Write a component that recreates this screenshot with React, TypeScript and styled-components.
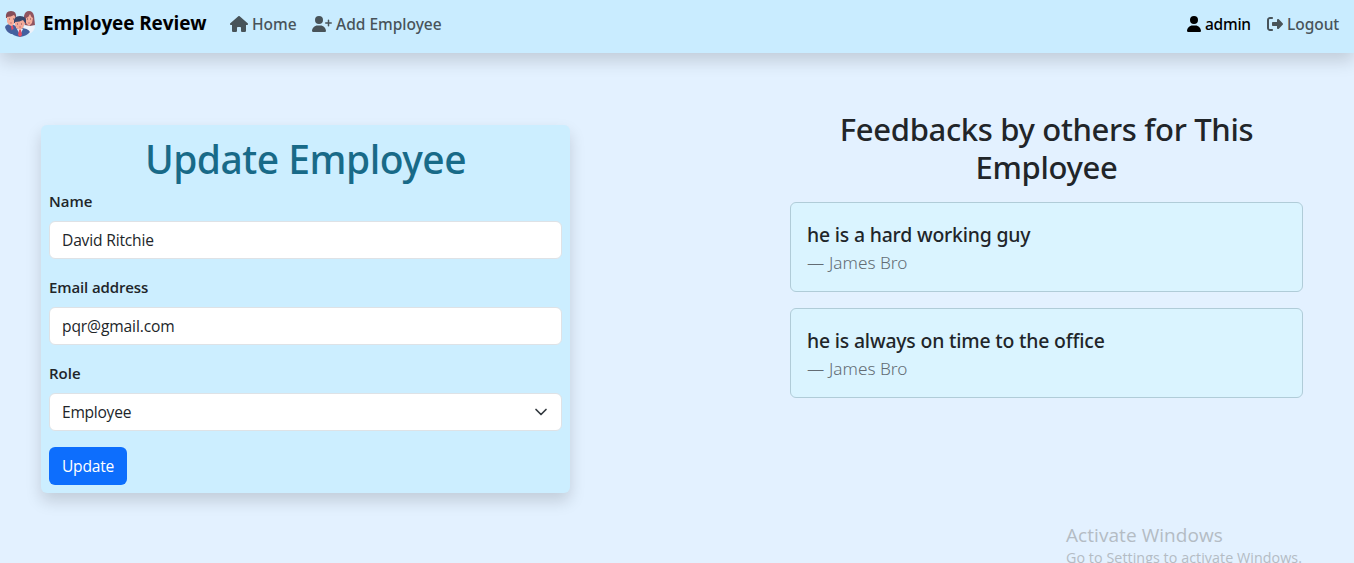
import React from "react";
import styled, { createGlobalStyle } from "styled-components";
import { FaHouse, FaUserPlus, FaUser, FaRightFromBracket } from "react-icons/fa6";

const GlobalStyle = createGlobalStyle`
  *, *::before, *::after { box-sizing: border-box; }
  body {
    margin: 0;
    background: #e3f1ff;
    color: #212529;
    font: 400 16px/1.5 "Noto Sans", "Open Sans", sans-serif;
    overflow: hidden;
  }
  h1, h2, p { margin: 0; }
`;

const Page = styled.div`
  position: relative;
  height: 563px;
  overflow: hidden;
`;

const Navbar = styled.nav`
  display: flex;
  align-items: center;
  height: 53px;
  padding: 0 15px 5px 5px;
  background: #c9ecff;
  box-shadow: 0 8px 16px rgba(0, 0, 0, 0.15);
`;

const Brand = styled.div`
  display: flex;
  align-items: center;
  gap: 6px;
  width: 225px;
  color: #000;
  font-family: "Open Sans", sans-serif;
  font-size: 19px;
  font-weight: 700;
  line-height: 26px;
  white-space: nowrap;
  svg { margin-left: -1px; margin-right: 1px; }
  span { margin-top: -2px; }
`;

const NavLink = styled.a<{ $active?: boolean; $width: number; $icon: number }>`
  display: flex;
  align-items: center;
  gap: 4px;
  width: ${(p) => p.$width}px;
  color: ${(p) => (p.$active ? "#000" : "#485359")};
  font-size: 15.5px;
  font-weight: 500;
  line-height: 24px;
  white-space: nowrap;
  svg { flex: none; height: 16px; width: ${(p) => p.$icon}px; }
`;

const NavEnd = styled.div`
  display: flex;
  margin-left: auto;
`;

const Text = styled.span<{ $track?: number }>`
  display: inline-block;
  letter-spacing: ${(p) => p.$track ?? 0}px;
`;

const Main = styled.main`
  display: flex;
  justify-content: space-between;
  padding: 0 51px 0 41px;
`;

const FormCard = styled.form`
  width: 529px;
  height: 368px;
  margin-top: 72px;
  padding: 8px;
  border-radius: 6px;
  background: #cceeff;
  box-shadow: 0 8px 16px rgba(0, 0, 0, 0.15);
`;

const FormTitle = styled.h1`
  margin-bottom: 8px;
  color: #186a88;
  font-size: 39px;
  font-weight: 500;
  line-height: 51px;
  height: 48px;
  text-align: center;
  white-space: nowrap;
`;

const Field = styled.div`
  margin-bottom: 16px;
`;

const Label = styled.label`
  display: block;
  height: 24px;
  margin-bottom: 8px;
  font-family: "Open Sans", sans-serif;
  font-size: 15px;
  font-weight: 600;
  line-height: 24px;
`;

const Control = styled.div`
  display: flex;
  align-items: center;
  justify-content: space-between;
  height: 38px;
  padding: 0 12px;
  border: 1px solid #dee2e6;
  border-radius: 6px;
  background: #fff;
  font-family: "Open Sans", sans-serif;
  font-size: 15.6px;
  line-height: 24px;
`;

const UpdateButton = styled.button`
  display: block;
  width: 78px;
  height: 38px;
  padding: 0;
  border: 0;
  border-radius: 6px;
  background: #0d6efd;
  color: #fff;
  font: 400 15.6px/24px "Open Sans", sans-serif;
`;

const Feedbacks = styled.section`
  width: 513px;
  margin-top: 57px;
`;

const FeedbackTitle = styled.h2`
  height: 92px;
  font-size: 31px;
  font-weight: 500;
  line-height: 38px;
  text-align: center;
  white-space: nowrap;
`;

const FeedbackCard = styled.article`
  height: 90px;
  margin-bottom: 16px;
  padding: 17px 16px 15px;
  border: 1px solid #b0ccd8;
  border-radius: 6px;
  background: #daf4ff;
`;

const Quote = styled.p`
  font-size: 19.4px;
  font-weight: 500;
  line-height: 30px;
  white-space: nowrap;
`;

const Author = styled.p`
  display: flex;
  gap: 4px;
  color: #636c74;
  font-size: 17.2px;
  font-weight: 300;
  line-height: 26px;
`;

const Dash = styled.span`
  width: 18px;
  white-space: nowrap;
`;

const Watermark = styled.aside`
  position: absolute;
  left: 1066px;
  top: 522px;
  color: #b4bcc4;
  font-family: "Open Sans", sans-serif;
  white-space: nowrap;
`;

const WatermarkTitle = styled.div`
  font-size: 19px;
  line-height: 26px;
`;

const WatermarkNote = styled.div`
  font-size: 14.3px;
  line-height: 20px;
`;

const TeamLogo = () => (
  <svg width="32" height="28" viewBox="0 0 32 28">
    <path d="M1 17q1-3 6-3l5 2v8H7q-5-2-6-7Z" fill="#465f9d" />
    <path d="M31 17q-1-3-6-3l-5 2v8h5q5-2 6-7Z" fill="#eef2fa" />
    <path d="m7 16 1-1 1 1 1 5-2 2Z" fill="#e64d63" />
    <path d="M20 13V6q1-5 5-5t5 5l1 9-5 1-5-1Z" fill="#905460" />
    <path d="M2 8Q1 1 7 1q6 0 5 7Z" fill="#844d59" />
    <path d="M3 7q4 0 7-2l2 3-1 5-3 3q-3 0-5-4Z" fill="#f5ae9c" />
    <path d="M22 8q3-1 4-4 1 3 3 4l-1 5-3 3-3-3Z" fill="#f5ae9c" />
    <path d="M6 22q2-4 10-4t10 4q-3 4-10 5-7-1-10-5Z" fill="#43609f" />
    <path d="m13 19 3 6 3-6Z" fill="#e8effa" />
    <path d="m15 20 1-1 1 1 1 5-2 2-2-2Z" fill="#e54e62" />
    <path d="M10 13Q9 6 16 6t6 7Z" fill="#36466d" />
    <path d="M11 12q5 0 8-2l2 3-2 5-3 2q-4-1-5-5Z" fill="#f4a998" />
    <path d="M5 9h1m3 0h1M13 14h1m3 0h1M23 9h1m2 0h1" stroke="#715063" />
    <path d="M6 13h2M15 17h2M24 13h2" stroke="#b3606a" strokeWidth=".7" />
  </svg>
);

const Chevron = () => (
  <svg width="16" height="16" viewBox="0 0 16 16" fill="none">
    <path d="m3 5.5 5 5 5-5" stroke="#343a40" strokeWidth="1.7" strokeLinecap="round" strokeLinejoin="round" />
  </svg>
);

const feedbacks = [
  { quote: "he is a hard working guy", author: "James Bro" },
  { quote: "he is always on time to the office", author: "James Bro" },
];

export default function App() {
  return (
    <Page>
      <GlobalStyle />
      <Navbar>
        <Brand><TeamLogo /><Text $track={-0.1}>Employee Review</Text></Brand>
        <NavLink $width={82} $icon={18}><FaHouse /><Text>Home</Text></NavLink>
        <NavLink $width={135} $icon={20}><FaUserPlus /><Text>Add Employee</Text></NavLink>
        <NavEnd>
          <NavLink $active $width={80} $icon={14}><FaUser /><Text $track={-0.25}>admin</Text></NavLink>
          <NavLink $width={72} $icon={16}><FaRightFromBracket /><Text $track={-0.05}>Logout</Text></NavLink>
        </NavEnd>
      </Navbar>
      <Main>
        <FormCard>
          <FormTitle><Text $track={-0.5}>Update Employee</Text></FormTitle>
          <Field><Label><Text>Name</Text></Label><Control><Text $track={-0.18}>David Ritchie</Text></Control></Field>
          <Field><Label><Text $track={-0.12}>Email address</Text></Label><Control><Text $track={-0.13}>pqr@gmail.com</Text></Control></Field>
          <Field><Label><Text>Role</Text></Label><Control><Text $track={-0.27}>Employee</Text><Chevron /></Control></Field>
          <UpdateButton type="button"><Text $track={-0.2}>Update</Text></UpdateButton>
        </FormCard>
        <Feedbacks>
          <FeedbackTitle><Text $track={-0.33}>Feedbacks by others for This</Text><br /><Text $track={-0.33}>Employee</Text></FeedbackTitle>
          {feedbacks.map((f) => (
            <FeedbackCard key={f.quote}>
              <Quote><Text $track={-0.18}>{f.quote}</Text></Quote>
              <Author><Dash>—</Dash><Text>{f.author}</Text></Author>
            </FeedbackCard>
          ))}
        </Feedbacks>
      </Main>
      <Watermark>
        <WatermarkTitle><Text $track={0.06}>Activate Windows</Text></WatermarkTitle>
        <WatermarkNote><Text $track={0.05}>Go to Settings to activate Windows.</Text></WatermarkNote>
      </Watermark>
    </Page>
  );
}
